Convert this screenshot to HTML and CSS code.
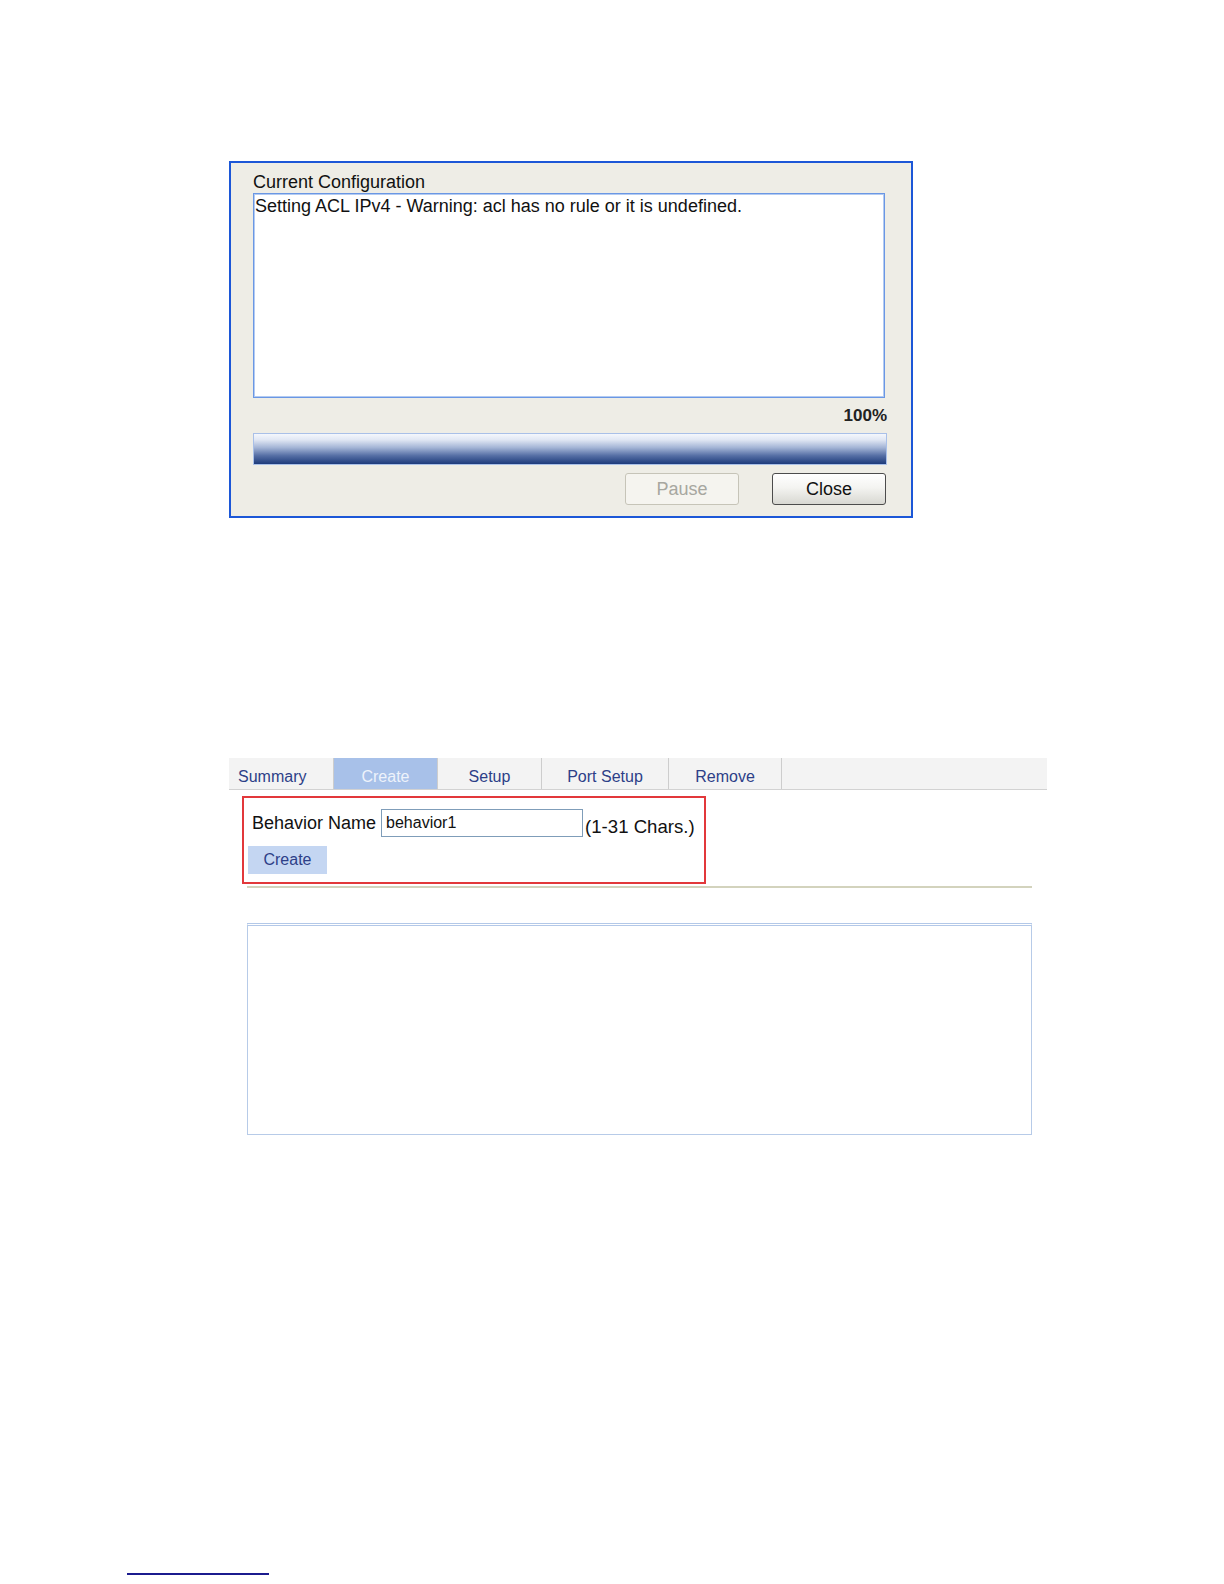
FILE: index.html
```html
<!DOCTYPE html>
<html lang="en">
<head>
<meta charset="utf-8">
<title>Current Configuration</title>
<link rel="stylesheet" href="styles.css">
</head>
<body>
<div class="page">
  <div class="dialog">
    <div class="dlg-label">Current Configuration</div>
    <div class="log">Setting ACL IPv4 - Warning: acl has no rule or it is undefined.</div>
    <div class="pct">100%</div>
    <div class="progress"></div>
    <div class="btns">
      <button class="btn btn-disabled" disabled>Pause</button>
      <button class="btn btn-close">Close</button>
    </div>
  </div>

  <div class="panel">
    <div class="tabs">
      <div class="tab tab-first">Summary</div>
      <div class="tab tab-active tab-w104">Create</div>
      <div class="tab tab-w104">Setup</div>
      <div class="tab tab-w127">Port Setup</div>
      <div class="tab tab-w113">Remove</div>
    </div>
    <div class="form-box">
      <div class="form-row">
        <span class="form-label">Behavior Name</span>
        <input class="name-input" type="text" value="behavior1">
        <span class="hint">(1-31 Chars.)</span>
      </div>
      <button class="create-btn">Create</button>
    </div>
    <div class="rule"></div>
    <div class="result-box"></div>
  </div>

  <div class="foot-rule"></div>
</div>
</body>
</html>
```
FILE: styles.css
```css
html, body {
  margin: 0;
  padding: 0;
  background: #ffffff;
}
body {
  font-family: "Liberation Sans", Arial, sans-serif;
  color: #111;
}
.page {
  display: flex;
  flex-direction: column;
  align-items: flex-start;
}

/* ---------- dialog ---------- */
.dialog {
  margin: 161px 0 0 229px;
  width: 684px;
  box-sizing: border-box;
  border: 2px solid #1c57d7;
  background: #eeede6;
  padding: 9px 24px 11px 22px;
  display: flex;
  flex-direction: column;
}
.dlg-label {
  font-size: 18px;
  line-height: 21px;
  color: #111;
}
.log {
  width: 632px;
  height: 205px;
  box-sizing: border-box;
  background: #fff;
  border: 1px solid #6a97e4;
  box-shadow: inset 0 0 0 1px #b3cbf2;
  padding: 2px 0 0 1px;
  font-size: 18px;
  line-height: 20px;
  color: #111;
}
.pct {
  margin-top: 4px;
  align-self: flex-end;
  font-size: 17px;
  font-weight: bold;
  line-height: 28px;
  color: #222;
}
.progress {
  margin-top: 3px;
  width: 634px;
  height: 32px;
  box-sizing: border-box;
  border: 1px solid #a9c0e8;
  background: linear-gradient(to bottom, #f4f7fc 0%, #dfe6f3 20%, #a4b5d6 45%, #566fa5 72%, #1d3b7b 100%);
}
.btns {
  margin-top: 8px;
  display: flex;
  justify-content: flex-end;
  gap: 33px;
  padding-right: 1px;
}
.btn {
  width: 114px;
  height: 32px;
  box-sizing: border-box;
  border-radius: 3px;
  font-family: "Liberation Sans", Arial, sans-serif;
  font-size: 18px;
  padding: 0;
  margin: 0;
}
.btn-disabled {
  border: 1px solid #c6c4b8;
  background: #f5f4ef;
  color: #a7a7a0;
}
.btn-close {
  border: 1px solid #4c4c4c;
  background: linear-gradient(to bottom, #ffffff 0%, #f4f4f1 45%, #d8d8d2 100%);
  color: #111;
}

/* ---------- tabs panel ---------- */
.panel {
  margin: 240px 0 0 229px;
  width: 818px;
  display: flex;
  flex-direction: column;
  align-items: flex-start;
}
.tabs {
  width: 818px;
  height: 32px;
  box-sizing: border-box;
  background: #f3f3f3;
  border-bottom: 1px solid #d2d2d2;
  display: flex;
}
.tab {
  height: 31px;
  box-sizing: border-box;
  padding-top: 7px;
  line-height: 24px;
  font-size: 16px;
  color: #2d3f88;
  text-align: center;
  border-right: 1px solid #cdcdcd;
}
.tab-first {
  width: 105px;
  text-align: left;
  padding-left: 9px;
}
.tab-w104 { width: 104px; }
.tab-w127 { width: 127px; }
.tab-w113 { width: 113px; }
.tab-active {
  background: #a8c1e9;
  color: #eef3fb;
}

.form-box {
  margin: 6px 0 0 13px;
  width: 464px;
  height: 88px;
  box-sizing: border-box;
  border: 2px solid #e2383b;
  padding: 11px 8px 8px 4px;
  display: flex;
  flex-direction: column;
  align-items: flex-start;
  gap: 9px;
}
.form-row {
  display: flex;
  align-items: center;
  height: 28px;
  padding-left: 4px;
}
.form-label {
  font-size: 18px;
  line-height: 20px;
  color: #111;
  margin-right: 5px;
}
.name-input {
  width: 202px;
  height: 28px;
  box-sizing: border-box;
  border: 1px solid #7f9db9;
  padding: 0 0 0 4px;
  margin: 0;
  font-family: "Liberation Sans", Arial, sans-serif;
  font-size: 16px;
  color: #111;
  outline: none;
}
.hint {
  align-self: flex-end;
  font-size: 18.6px;
  line-height: 20px;
  margin-left: 2px;
  color: #111;
}
.create-btn {
  margin: 0;
  width: 79px;
  height: 28px;
  border: none;
  padding: 0;
  background: #c4d6f2;
  color: #2d3f88;
  font-family: "Liberation Sans", Arial, sans-serif;
  font-size: 16px;
}

.rule {
  margin: 2px 0 0 18px;
  width: 785px;
  height: 2px;
  background: #d3d3bd;
}
.result-box {
  margin: 35px 0 0 18px;
  width: 785px;
  height: 212px;
  box-sizing: border-box;
  border: 1px solid #b7cbe8;
  border-top: 3px double #b3c8e8;
  background: #fff;
}

.foot-rule {
  margin: 438px 0 0 127px;
  width: 142px;
  height: 2px;
  background: #1b1b8e;
}
```
